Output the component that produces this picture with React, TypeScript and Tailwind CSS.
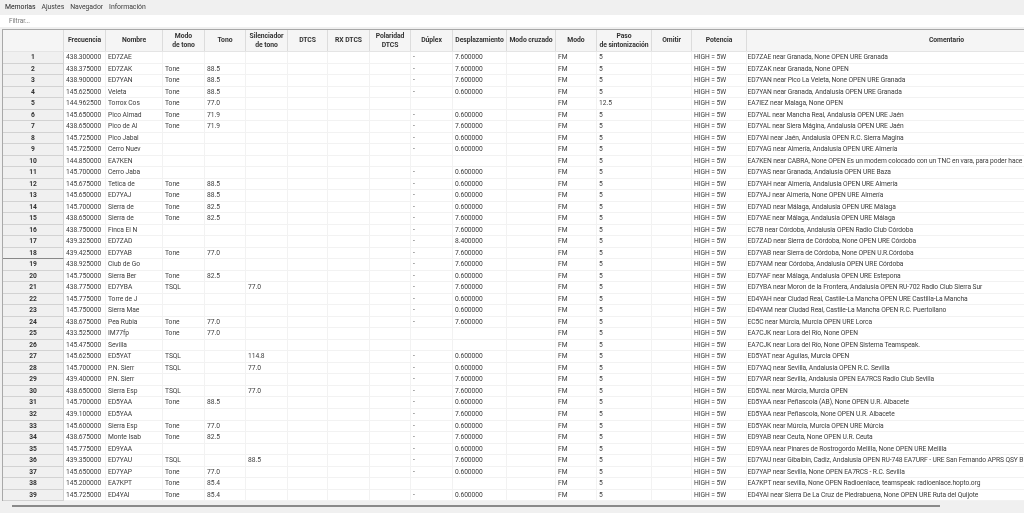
const gridCols = "grid-cols-[61px_42px_57px_42px_41px_42px_40px_42px_41px_42px_54px_49px_41px_55px_40px_55px_400px]";

const heads = ["", "Frecuencia", "Nombre", "Modo|de tono", "Tono", "Silenciador|de tono", "DTCS", "RX DTCS", "Polaridad|DTCS", "Dúplex", "Desplazamiento", "Modo cruzado", "Modo", "Paso|de sintonización", "Omitir", "Potencia", "Comentario"];

type R = [string, string, string, string, string, string, string, string];
const rows: R[] = [
  ["438.300000", "ED7ZAE", "", "", "", "7.600000", "5", "ED7ZAE near Granada, None OPEN URE Granada"],
  ["438.375000", "ED7ZAK", "Tone", "88.5", "", "7.600000", "5", "ED7ZAK near Granada, None OPEN"],
  ["438.900000", "ED7YAN", "Tone", "88.5", "", "7.600000", "5", "ED7YAN near Pico La Veleta, None OPEN URE Granada"],
  ["145.625000", "Veleta", "Tone", "88.5", "", "0.600000", "5", "ED7YAN near Granada, Andalusia OPEN URE Granada"],
  ["144.962500", "Torrox Cos", "Tone", "77.0", "", "", "12.5", "EA7IEZ near Malaga, None OPEN"],
  ["145.650000", "Pico Almad", "Tone", "71.9", "", "0.600000", "5", "ED7YAL near Mancha Real, Andalusia OPEN URE Jaén"],
  ["438.650000", "Pico de Al", "Tone", "71.9", "", "7.600000", "5", "ED7YAL near Siera Mágina, Andalusia OPEN URE Jaén"],
  ["145.725000", "Pico Jabal", "", "", "", "0.600000", "5", "ED7YAI near Jaén, Andalusia OPEN R.C. Sierra Magina"],
  ["145.725000", "Cerro Nuev", "", "", "", "0.600000", "5", "ED7YAG near Almería, Andalusia OPEN URE Almería"],
  ["144.850000", "EA7KEN", "", "", "", "", "5", "EA7KEN near CABRA, None OPEN Es un modem colocado con un TNC en vara, para poder hace"],
  ["145.700000", "Cerro Jaba", "", "", "", "0.600000", "5", "ED7YAS near Granada, Andalusia OPEN URE Baza"],
  ["145.675000", "Tetica de", "Tone", "88.5", "", "0.600000", "5", "ED7YAH near Almería, Andalusia OPEN URE Almería"],
  ["145.650000", "ED7YAJ", "Tone", "88.5", "", "0.600000", "5", "ED7YAJ near Almería, None OPEN URE Almería"],
  ["145.700000", "Sierra de", "Tone", "82.5", "", "0.600000", "5", "ED7YAD near Málaga, Andalusia OPEN URE Málaga"],
  ["438.650000", "Sierra de", "Tone", "82.5", "", "7.600000", "5", "ED7YAE near Málaga, Andalusia OPEN URE Málaga"],
  ["438.750000", "Finca El N", "", "", "", "7.600000", "5", "EC7B near Córdoba, Andalusia OPEN Radio Club Córdoba"],
  ["439.325000", "ED7ZAD", "", "", "", "8.400000", "5", "ED7ZAD near Sierra de Córdoba, None OPEN URE Córdoba"],
  ["439.425000", "ED7YAB", "Tone", "77.0", "", "7.600000", "5", "ED7YAB near Sierra de Córdoba, None OPEN U.R.Córdoba"],
  ["438.925000", "Club de Go", "", "", "", "7.600000", "5", "ED7YAM near Córdoba, Andalusia OPEN URE Córdoba"],
  ["145.750000", "Sierra Ber", "Tone", "82.5", "", "0.600000", "5", "ED7YAF near Málaga, Andalusia OPEN URE Estepona"],
  ["438.775000", "ED7YBA", "TSQL", "", "77.0", "7.600000", "5", "ED7YBA near Moron de la Frontera, Andalusia OPEN RU-702 Radio Club Sierra Sur"],
  ["145.775000", "Torre de J", "", "", "", "0.600000", "5", "ED4YAH near Ciudad Real, Castile-La Mancha OPEN URE Castilla-La Mancha"],
  ["145.750000", "Sierra Mae", "", "", "", "0.600000", "5", "ED4YAM near Ciudad Real, Castile-La Mancha OPEN R.C. Puertollano"],
  ["438.675000", "Pea Rubia", "Tone", "77.0", "", "7.600000", "5", "EC5C near Múrcia, Murcia OPEN URE Lorca"],
  ["433.525000", "IM77fp", "Tone", "77.0", "", "", "5", "EA7CJK near Lora del Río, None OPEN"],
  ["145.475000", "Sevilla", "", "", "", "", "5", "EA7CJK near Lora del Río, None OPEN Sistema Teamspeak."],
  ["145.625000", "ED5YAT", "TSQL", "", "114.8", "0.600000", "5", "ED5YAT near Aguilas, Murcia OPEN"],
  ["145.700000", "P.N. Sierr", "TSQL", "", "77.0", "0.600000", "5", "ED7YAQ near Sevilla, Andalusia OPEN R.C. Sevilla"],
  ["439.400000", "P.N. Sierr", "", "", "", "7.600000", "5", "ED7YAR near Sevilla, Andalusia OPEN EA7RCS Radio Club Sevilla"],
  ["438.650000", "Sierra Esp", "TSQL", "", "77.0", "7.600000", "5", "ED5YAL near Múrcia, Murcia OPEN"],
  ["145.700000", "ED5YAA", "Tone", "88.5", "", "0.600000", "5", "ED5YAA near Peñascola (AB), None OPEN U.R. Albacete"],
  ["439.100000", "ED5YAA", "", "", "", "7.600000", "5", "ED5YAA near Peñascola, None OPEN U.R. Albacete"],
  ["145.600000", "Sierra Esp", "Tone", "77.0", "", "0.600000", "5", "ED5YAK near Múrcia, Murcia OPEN URE Múrcia"],
  ["438.675000", "Monte Isab", "Tone", "82.5", "", "7.600000", "5", "ED9YAB near Ceuta, None OPEN U.R. Ceuta"],
  ["145.775000", "ED9YAA", "", "", "", "0.600000", "5", "ED9YAA near Pinares de Rostrogordo Melilla, None OPEN URE Melilla"],
  ["439.350000", "ED7YAU", "TSQL", "", "88.5", "7.600000", "5", "ED7YAU near Gibalbin, Cadiz, Andalusia OPEN RU-748 EA7URF - URE San Fernando APRS QSY B"],
  ["145.650000", "ED7YAP", "Tone", "77.0", "", "0.600000", "5", "ED7YAP near Sevilla, None OPEN EA7RCS - R.C. Sevilla"],
  ["145.200000", "EA7KPT", "Tone", "85.4", "", "", "5", "EA7KPT near sevilla, None OPEN Radioenlace, teamspeak: radioenlace.hopto.org"],
  ["145.725000", "ED4YAI", "Tone", "85.4", "", "0.600000", "5", "ED4YAI near Sierra De La Cruz de Piedrabuena, None OPEN URE Ruta del Quijote"],
];

function Cell({ children, flush }: { children?: React.ReactNode; flush?: boolean }) {
  return (
    <div className={`overflow-hidden whitespace-nowrap border-r border-b border-[#f2f2f2] leading-[10px] ${flush ? "pl-[0.5px] tracking-[-0.09px]" : "pl-[2px]"}`}>
      {children}
    </div>
  );
}

export default function App() {
  return (
    <div className="h-[513px] w-[1024px] overflow-hidden bg-[#f0f0f0] text-[6.7px] tracking-[-0.05px] text-[#3c3c3c] blur-[0.3px] [font-family:Roboto,sans-serif]">
      <div className="flex h-[13px] items-center gap-[6px] pl-[5px] pt-[1px] text-[6.9px]">
        <span className="text-[#222]">Memorias</span>
        <span>Ajustes</span>
        <span>Navegador</span>
        <span>Información</span>
      </div>
      <div className="mt-[2px] flex h-[12px] items-center bg-white pl-[9px] pt-[2px] text-[6.5px] text-[#777]">Filtrar...</div>
      <div className="mt-[2px] ml-[2px] border-t border-l border-[#a8a8a8] bg-white">
        <div className={`grid h-[22px] ${gridCols} border-b border-[#e4e4e4] bg-[#f5f5f5]`}>
          {heads.map((h, i) => (
            <div
              key={i}
              className="flex flex-col items-center justify-center whitespace-nowrap border-r border-[#dcdcdc] text-[6.8px] font-bold leading-[8.5px] text-[#333]"
            >
              {h.split("|").map((l) => (
                <span key={l}>{l}</span>
              ))}
            </div>
          ))}
        </div>
        {rows.map((r, i) => (
          <div key={i} className={`grid h-[11.53px] ${gridCols}`}>
            <div
              className={`border-r border-b border-[#d2d2d2] bg-[#f0f0f0] text-center font-bold leading-[10px] text-[#333] ${i === 17 ? "border-b-[#888]" : ""}`}
            >
              {i + 1}
            </div>
            <Cell>{r[0]}</Cell>
            <Cell>{r[1]}</Cell>
            <Cell>{r[2]}</Cell>
            <Cell>{r[3]}</Cell>
            <Cell>{r[4]}</Cell>
            <Cell />
            <Cell />
            <Cell />
            <Cell>{r[5] ? "-" : ""}</Cell>
            <Cell>{r[5]}</Cell>
            <Cell />
            <Cell>FM</Cell>
            <Cell>{r[6]}</Cell>
            <Cell />
            <Cell>HIGH = 5W</Cell>
            <Cell flush>{r[7]}</Cell>
          </div>
        ))}
      </div>
      <div className="mt-[4px] ml-[12px] h-[2px] w-[928px] bg-[#8a8a8a]" />
    </div>
  );
}
